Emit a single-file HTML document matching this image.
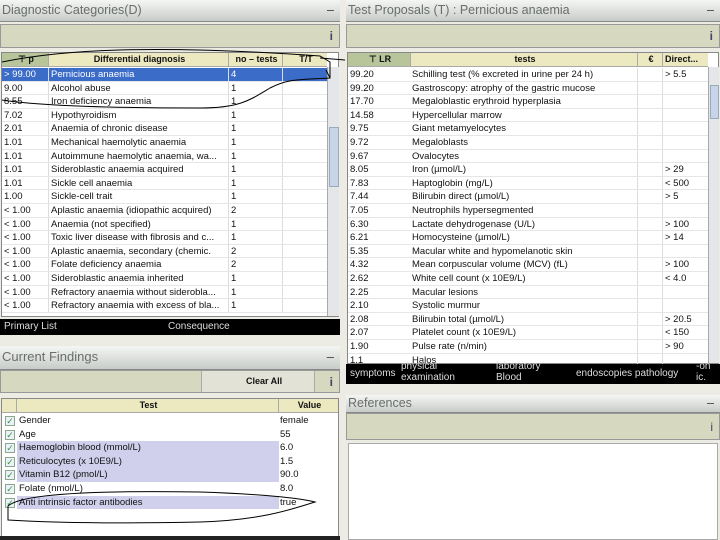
<!DOCTYPE html><html><head><style>
*{margin:0;padding:0;box-sizing:border-box}
body{width:720px;height:540px;background:#ecece4;font-family:"Liberation Sans",sans-serif;font-size:9.5px;position:relative;overflow:hidden;color:#111}
.a{position:absolute}
.title{background:linear-gradient(#f4f6f4,#c8ccc8);color:#6a6e6a;font-size:12.5px;padding:3px 2px;border-bottom:1px solid #888}
.title span{position:absolute;right:6px;top:3px;color:#444}
.tb{background:#d6d8c0;border:1px solid #999}
.tb i{position:absolute;right:6px;top:4px;font-style:normal;font-weight:bold;color:#446;font-size:12px}
.tbl{background:#fff;border:1px solid #888}
.hd{background:#ece8c0;border-bottom:1px solid #aaa;height:14px;font-weight:bold;font-size:9px}
.c{position:absolute;white-space:nowrap;overflow:hidden;height:100%;padding-left:2px;line-height:13px}
.row{position:absolute;left:0;border-bottom:1px solid #e6e6e6}
.black{background:#000;color:#ddd}
.sb{background:#e4e6ea;border-left:1px solid #aaa}
</style></head><body>
<div class="a title" style="left:0;top:0;width:340px;height:22px">Diagnostic Categories(D)<span>–</span></div>
<div class="a tb" style="left:0;top:24px;width:340px;height:24px"><i>i</i></div>
<div class="a tbl" style="left:1px;top:52px;width:338px;height:265px">
<div class="a hd" style="left:0;top:0;width:325px">
<div class="c" style="left:0;width:46px;background:#b8c49a;text-align:center">⊤ p</div>
<div class="c" style="left:46px;width:180px;text-align:center;border-left:1px solid #aaa">Differential diagnosis</div>
<div class="c" style="left:226px;width:54px;text-align:center;border-left:1px solid #aaa">no – tests</div>
<div class="c" style="left:280px;width:45px;text-align:center;border-left:1px solid #aaa">T/T</div></div>
<div class="a sb" style="left:325px;top:14px;width:12px;height:249px"><div class="a" style="left:1px;top:60px;width:10px;height:60px;background:#c8d4e8;border:1px solid #9ab"></div></div>
<div id="L"></div>
</div>
<div class="a black" style="left:0;top:319px;width:340px;height:16px;font-size:10px;line-height:16px"><span style="padding-left:4px">Primary List</span><span class="a" style="left:168px">Consequence</span></div>
<div class="a title" style="left:0;top:346px;width:340px;height:24px;font-size:13px">Current Findings<span>–</span></div>
<div class="a tb" style="left:0;top:370px;width:340px;height:23px"><div class="a" style="left:200px;top:0;width:114px;height:21px;background:#e2e2d6;border-left:1px solid #aaa;border-right:1px solid #aaa;font-weight:bold;font-size:9px;line-height:21px;padding-left:44px">Clear All</div><i>i</i></div>
<div class="a tbl" style="left:1px;top:398px;width:338px;height:142px">
<div class="a hd" style="left:0;top:0;width:336px"><div class="c" style="left:0;width:14px;background:#ece8c0"></div><div class="c" style="left:14px;width:262px;text-align:center;border-left:1px solid #aaa">Test</div><div class="c" style="left:276px;width:60px;text-align:center;border-left:1px solid #aaa">Value</div></div>
<div id="F"></div></div>
<div class="a" style="left:0;top:536px;width:340px;height:4px;background:#222"></div>
<div class="a title" style="left:346px;top:0;width:374px;height:22px">Test Proposals (T) : Pernicious anaemia<span>–</span></div>
<div class="a tb" style="left:346px;top:24px;width:374px;height:24px"><i>i</i></div>
<div class="a tbl" style="left:347px;top:52px;width:372px;height:312px">
<div class="a hd" style="left:0;top:0;width:360px">
<div class="c" style="left:0;width:62px;background:#b8c49a;text-align:center">⊤ LR</div>
<div class="c" style="left:62px;width:227px;text-align:center;border-left:1px solid #aaa">tests</div>
<div class="c" style="left:289px;width:25px;text-align:center;border-left:1px solid #aaa">€</div>
<div class="c" style="left:314px;width:46px;border-left:1px solid #aaa">Direct...</div></div>
<div class="a sb" style="left:360px;top:14px;width:11px;height:296px"><div class="a" style="left:1px;top:18px;width:9px;height:34px;background:#c8d4e8;border:1px solid #9ab"></div></div>
<div id="R"></div></div>
<div class="a black" style="left:346px;top:364px;width:374px;height:20px;font-size:10px"><span class="a" style="left:4px;top:4px">symptoms</span><span class="a" style="left:55px;top:-3px">physical<br>examination</span><span class="a" style="left:150px;top:-3px">laboratory<br>Blood</span><span class="a" style="left:230px;top:4px">endoscopies pathology</span><span class="a" style="left:350px;top:-3px">-on<br>ic.</span></div>
<div class="a title" style="left:346px;top:395px;width:374px;height:18px;padding-top:1px">References<span style="top:1px">–</span></div>
<div class="a tb" style="left:346px;top:413px;width:374px;height:27px"><i style="top:6px;font-weight:normal">i</i></div>
<div class="a" style="left:348px;top:443px;width:370px;height:97px;background:#fff;border:1px solid #aaa"></div>
<svg class="a" style="left:0;top:0" width="720" height="540" fill="none" stroke="#000" stroke-width="1"><path d="M2 62 C60 50 150 44 320 56 L330 62 L330 78 C300 80 290 78 270 88 C250 100 240 108 200 108 C120 108 40 106 2 100"/><path d="M320 58 L345 60 M330 78 L326 70"/><path d="M8 506 C20 495 80 490 200 492 C260 494 300 498 315 502 C290 510 260 520 200 522 C100 524 40 522 8 520 Z"/></svg>
<script>
var L=[["> 99.00","Pernicious anaemia","4"],["9.00","Alcohol abuse","1"],["8.55","Iron deficiency anaemia","1"],["7.02","Hypothyroidism","1"],["2.01","Anaemia of chronic disease","1"],["1.01","Mechanical haemolytic anaemia","1"],["1.01","Autoimmune haemolytic anaemia, wa...","1"],["1.01","Sideroblastic anaemia acquired","1"],["1.01","Sickle cell anaemia","1"],["1.00","Sickle-cell trait","1"],["< 1.00","Aplastic anaemia (idiopathic acquired)","2"],["< 1.00","Anaemia (not specified)","1"],["< 1.00","Toxic liver disease with fibrosis and c...","1"],["< 1.00","Aplastic anaemia, secondary (chemic.","2"],["< 1.00","Folate deficiency anaemia","2"],["< 1.00","Sideroblastic anaemia inherited","1"],["< 1.00","Refractory anaemia without siderobla...","1"],["< 1.00","Refractory anaemia with excess of bla...","1"]];
var h="",y=15;L.forEach(function(r,i){var s=i==0?"background:#3a6cc8;color:#fff;":"";h+='<div class="row" style="top:'+y+'px;width:325px;height:13.6px;'+s+'"><div class="c" style="left:0;width:46px">'+r[0]+'</div><div class="c" style="left:46px;width:180px;border-left:1px solid #ddd">'+r[1]+'</div><div class="c" style="left:226px;width:54px;border-left:1px solid #ddd">'+r[2]+'</div><div class="c" style="left:280px;width:45px;border-left:1px solid #ddd"></div></div>';y+=13.6});document.getElementById("L").outerHTML=h;
var R=[["99.20","Schilling test (% excreted in urine per 24 h)","> 5.5"],["99.20","Gastroscopy: atrophy of the gastric mucose",""],["17.70","Megaloblastic erythroid hyperplasia",""],["14.58","Hypercellular marrow",""],["9.75","Giant metamyelocytes",""],["9.72","Megaloblasts",""],["9.67","Ovalocytes",""],["8.05","Iron (µmol/L)","> 29"],["7.83","Haptoglobin (mg/L)","< 500"],["7.44","Bilirubin direct (µmol/L)","> 5"],["7.05","Neutrophils hypersegmented",""],["6.30","Lactate dehydrogenase (U/L)","> 100"],["6.21","Homocysteine (µmol/L)","> 14"],["5.35","Macular white and hypomelanotic skin",""],["4.32","Mean corpuscular volume (MCV) (fL)","> 100"],["2.62","White cell count (x 10E9/L)","< 4.0"],["2.25","Macular lesions",""],["2.10","Systolic murmur",""],["2.08","Bilirubin total (µmol/L)","> 20.5"],["2.07","Platelet count (x 10E9/L)","< 150"],["1.90","Pulse rate (n/min)","> 90"],["1.1","Halos",""]];
h="";y=15;R.forEach(function(r){h+='<div class="row" style="top:'+y+'px;width:360px;height:13.6px"><div class="c" style="left:0;width:62px">'+r[0]+'</div><div class="c" style="left:62px;width:227px">'+r[1]+'</div><div class="c" style="left:289px;width:25px;border-left:1px solid #ddd"></div><div class="c" style="left:314px;width:46px;border-left:1px solid #ddd">'+r[2]+'</div></div>';y+=13.6});document.getElementById("R").outerHTML=h;
var F=[["Gender","female",0],["Age","55",0],["Haemoglobin blood (mmol/L)","6.0",1],["Reticulocytes (x 10E9/L)","1.5",1],["Vitamin B12 (pmol/L)","90.0",1],["Folate (nmol/L)","8.0",0],["Anti intrinsic factor antibodies","true",1]];
h="";y=15;F.forEach(function(r){h+='<div class="row" style="top:'+y+'px;width:336px;height:13.6px;border:none"><div class="a" style="left:3px;top:2px;width:10px;height:10px;border:1px solid #8a8;background:#eef;color:#2a2;font-size:9px;line-height:9px;text-align:center">✓</div><div class="c" style="left:15px;width:262px;'+(r[2]?'background:#d0d0ec':'')+'">'+r[0]+'</div><div class="c" style="left:276px;width:60px">'+r[1]+'</div></div>';y+=13.6});document.getElementById("F").outerHTML=h;
</script>
</body></html>
